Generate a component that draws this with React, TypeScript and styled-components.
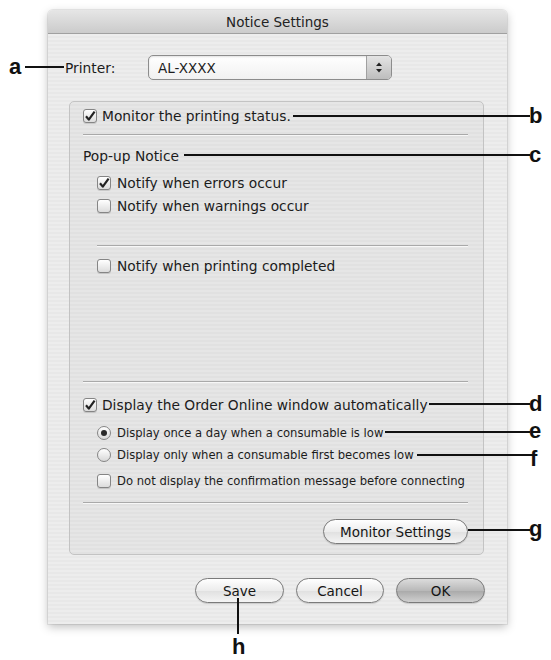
import React from "react";
import styled, { createGlobalStyle } from "styled-components";

const GlobalStyle = createGlobalStyle`
  html, body {
    margin: 0;
    padding: 0;
    background: #ffffff;
  }
  body {
    font-family: "DejaVu Sans", "Liberation Sans", sans-serif;
    color: #1c1c1c;
  }
`;

const Page = styled.div`
  position: relative;
  width: 551px;
  height: 660px;
  overflow: hidden;
  box-sizing: border-box;
  padding: 10px 0 0 48px;
`;

const Window = styled.div`
  width: 459px;
  height: 614px;
  display: flex;
  flex-direction: column;
  border-radius: 5px 5px 0 0;
  background: repeating-linear-gradient(180deg, #ededed 0 2px, #e8e8e8 2px 4px);
  box-shadow: 0 3px 10px rgba(0, 0, 0, 0.25), 0 0 0 1px rgba(0, 0, 0, 0.07);
`;

const TitleBar = styled.div`
  flex: none;
  height: 23px;
  display: flex;
  align-items: center;
  justify-content: center;
  border-radius: 5px 5px 0 0;
  border-bottom: 1px solid #a0a0a0;
  background: linear-gradient(#e6e6e6, #cbcbcb);
  font-size: 13.5px;
  color: #222;
`;

const Body = styled.div`
  display: flex;
  flex-direction: column;
  padding: 21px 0 0 17px;
`;

const PrinterRow = styled.div`
  display: flex;
  align-items: center;
  height: 25px;
`;

const FieldLabel = styled.span`
  width: 83px;
  font-size: 13.8px;
`;

const Popup = styled.div`
  width: 244px;
  height: 25px;
  box-sizing: border-box;
  display: flex;
  border: 1px solid #8c8c8c;
  border-radius: 5px;
  overflow: hidden;
  background: linear-gradient(#ffffff, #f1f1f1);
  box-shadow: inset 0 1px 2px rgba(0, 0, 0, 0.12);
`;

const PopupValue = styled.span`
  flex: 1;
  display: flex;
  align-items: center;
  padding-left: 9px;
  font-size: 13.5px;
`;

const PopupArrows = styled.span`
  width: 24px;
  display: flex;
  align-items: center;
  justify-content: center;
  border-left: 1px solid #a0a0a0;
  background: linear-gradient(#e4e4e4, #bdbdbd);
`;

const GroupBox = styled.div`
  margin: 21px 0 0 4px;
  width: 415px;
  height: 454px;
  box-sizing: border-box;
  display: flex;
  flex-direction: column;
  padding: 4px 15px 0 13px;
  border: 1px solid #c3c3c3;
  border-radius: 5px;
  background: repeating-linear-gradient(180deg, #e6e6e6 0 2px, #e1e1e1 2px 4px);
`;

const Row = styled.label<{ $indent?: number; $top: number; $small?: boolean }>`
  display: flex;
  align-items: center;
  gap: ${(p) => (p.$indent ? 6 : 5)}px;
  height: ${(p) => (p.$small ? 18 : 20)}px;
  margin-top: ${(p) => p.$top}px;
  padding-left: ${(p) => p.$indent ?? 0}px;
  font-size: ${(p) => (p.$small ? 11.6 : 13.8)}px;
  white-space: nowrap;
`;

const Heading = styled.div<{ $top: number }>`
  display: flex;
  align-items: center;
  height: 20px;
  margin-top: ${(p) => p.$top}px;
  font-size: 13.8px;
`;

const Separator = styled.div<{ $top: number; $indent?: number }>`
  height: 0;
  margin-top: ${(p) => p.$top}px;
  margin-left: ${(p) => p.$indent ?? 0}px;
  border-top: 1px solid #a9a9a9;
  border-bottom: 1px solid #f7f7f7;
`;

const Box = styled.span`
  flex: none;
  width: 14px;
  height: 14px;
  box-sizing: border-box;
  display: flex;
  align-items: center;
  justify-content: center;
  border: 1px solid #858585;
  border-radius: 3px;
  background: linear-gradient(#ffffff, #dcdcdc);
  box-shadow: 0 1px 0 rgba(0, 0, 0, 0.12);
`;

const Radio = styled.span<{ $on?: boolean }>`
  flex: none;
  width: 14px;
  height: 14px;
  box-sizing: border-box;
  display: flex;
  align-items: center;
  justify-content: center;
  border: 1px solid #858585;
  border-radius: 50%;
  background: linear-gradient(#ffffff, #d8d8d8);

  &::after {
    content: "";
    display: ${(p) => (p.$on ? "block" : "none")};
    width: 6px;
    height: 6px;
    border-radius: 50%;
    background: #2a2a2a;
  }
`;

const ButtonArea = styled.div<{ $top: number }>`
  display: flex;
  justify-content: flex-end;
  gap: 12px;
  margin-top: ${(p) => p.$top}px;
`;

const PushButton = styled.button<{ $width: number; $primary?: boolean }>`
  width: ${(p) => p.$width}px;
  height: 25px;
  padding: 0;
  border: 1px solid #7a7a7a;
  border-radius: 13px;
  font-family: "DejaVu Sans", "Liberation Sans", sans-serif;
  font-size: 13.5px;
  color: #151515;
  background: ${(p) =>
    p.$primary
      ? "linear-gradient(#dcdcdc, #b9b9b9 50%, #a9a9a9 51%, #cfcfcf)"
      : "linear-gradient(#ffffff, #ececec 50%, #e0e0e0 51%, #f4f4f4)"};
  box-shadow: 0 1px 1px rgba(0, 0, 0, 0.15);
`;

const Footer = styled.div`
  display: flex;
  justify-content: flex-end;
  gap: 12px;
  width: 420px;
  margin-top: 23px;
`;

const Callouts = styled.svg`
  position: absolute;
  left: 0;
  top: 0;
  pointer-events: none;
`;

const Letter = styled.text`
  font-family: "Liberation Sans", Arial, sans-serif;
  font-weight: bold;
  font-size: 22px;
  fill: #111;
`;

const Check = ({ on }: { on?: boolean }) => (
  <Box>
    {on && (
      <svg width="12" height="12" viewBox="0 0 12 12">
        <path d="M2 6.2 L4.8 9.6 L10.6 1.6" fill="none" stroke="#222" strokeWidth="2.2" strokeLinejoin="round" />
      </svg>
    )}
  </Box>
);

const leaders = [
  { x1: 25, y1: 67, x2: 64, y2: 67 },
  { x1: 293, y1: 116, x2: 530, y2: 116 },
  { x1: 184, y1: 155, x2: 530, y2: 155 },
  { x1: 429, y1: 404, x2: 530, y2: 404 },
  { x1: 385, y1: 432, x2: 530, y2: 432 },
  { x1: 417, y1: 455, x2: 533, y2: 455 },
  { x1: 468, y1: 530, x2: 530, y2: 530 },
  { x1: 238, y1: 598, x2: 238, y2: 634 },
];

const letters = [
  { ch: "a", x: 9, y: 74 },
  { ch: "b", x: 529, y: 123 },
  { ch: "c", x: 529, y: 162 },
  { ch: "d", x: 529, y: 411 },
  { ch: "e", x: 529, y: 438 },
  { ch: "f", x: 530, y: 466 },
  { ch: "g", x: 529, y: 536 },
  { ch: "h", x: 232, y: 654 },
];

export default function App() {
  return (
    <>
      <GlobalStyle />
      <Page>
        <Window>
          <TitleBar>Notice Settings</TitleBar>
          <Body>
            <PrinterRow>
              <FieldLabel>Printer:</FieldLabel>
              <Popup>
                <PopupValue>AL-XXXX</PopupValue>
                <PopupArrows>
                  <svg width="8" height="13" viewBox="0 0 8 13">
                    <path d="M4 1.5 L7 5 L1 5 Z" fill="#222" />
                    <path d="M4 11.5 L7 8 L1 8 Z" fill="#222" />
                  </svg>
                </PopupArrows>
              </Popup>
            </PrinterRow>

            <GroupBox>
              <Row $top={0}>
                <Check on />
                Monitor the printing status.
              </Row>
              <Separator $top={8} />
              <Heading $top={10}>Pop-up Notice</Heading>
              <Row $top={7} $indent={14}>
                <Check on />
                Notify when errors occur
              </Row>
              <Row $top={3} $indent={14}>
                <Check />
                Notify when warnings occur
              </Row>
              <Separator $top={29} $indent={14} />
              <Row $top={9} $indent={14}>
                <Check />
                Notify when printing completed
              </Row>
              <Separator $top={105} />
              <Row $top={12}>
                <Check on />
                Display the Order Online window automatically
              </Row>
              <Row $top={9} $indent={14} $small>
                <Radio $on />
                Display once a day when a consumable is low
              </Row>
              <Row $top={4} $indent={14} $small>
                <Radio />
                Display only when a consumable first becomes low
              </Row>
              <Row $top={8} $indent={14} $small>
                <Check />
                Do not display the confirmation message before connecting
              </Row>
              <Separator $top={12} />
              <ButtonArea $top={15}>
                <PushButton $width={145}>Monitor Settings</PushButton>
              </ButtonArea>
            </GroupBox>

            <Footer>
              <PushButton $width={89}>Save</PushButton>
              <PushButton $width={88}>Cancel</PushButton>
              <PushButton $width={89} $primary>
                OK
              </PushButton>
            </Footer>
          </Body>
        </Window>

        <Callouts width="551" height="660" viewBox="0 0 551 660">
          {leaders.map((l, i) => (
            <line key={i} {...l} stroke="#111" strokeWidth="2" />
          ))}
          {letters.map((l) => (
            <Letter key={l.ch} x={l.x} y={l.y}>
              {l.ch}
            </Letter>
          ))}
        </Callouts>
      </Page>
    </>
  );
}
